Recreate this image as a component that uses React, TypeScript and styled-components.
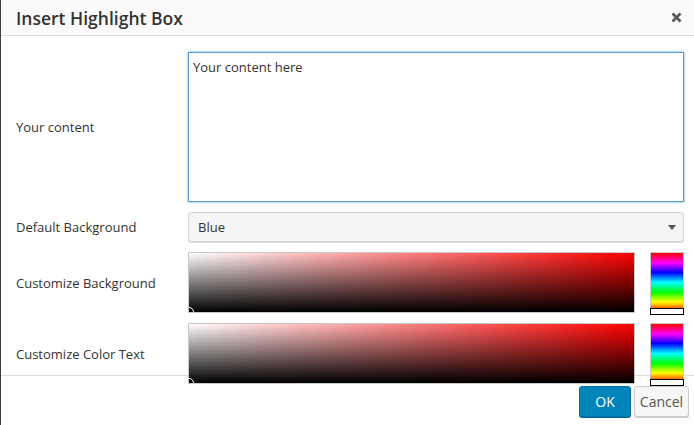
import React from "react";
import styled, { createGlobalStyle } from "styled-components";

const GlobalStyle = createGlobalStyle`
    html, body {
        margin: 0;
        padding: 0;
        background: #fff;
    }
    body {
        font-family: "Open Sans", "Noto Sans", sans-serif;
        color: #333;
    }
`;

const Dialog = styled.div`
    width: 694px;
    height: 425px;
    box-sizing: border-box;
    border-left: 1px solid #3f3f3f;
    display: flex;
    flex-direction: column;
    background: #fff;
`;

const Header = styled.div`
    height: 36px;
    flex: none;
    box-sizing: border-box;
    background: #fafafa;
    border-bottom: 1px solid #dcdcdc;
    display: flex;
    align-items: center;
    justify-content: space-between;
    padding: 0 8px 0 15px;
`;

const Title = styled.h1`
    margin: 0;
    font-size: 17.5px;
    font-weight: 600;
    color: #333;
`;

const CloseButton = styled.button`
    width: 20px;
    height: 20px;
    padding: 0;
    border: none;
    background: none;
    display: flex;
    align-items: center;
    justify-content: center;
    cursor: pointer;
`;

const Body = styled.div`
    position: relative;
    z-index: 1;
    height: 339px;
    flex: none;
    box-sizing: border-box;
    padding: 16px 10px 0 15px;
    display: grid;
    grid-template-columns: 172px 1fr;
    grid-auto-rows: min-content;
    row-gap: 10px;
    align-items: center;
`;

const Label = styled.label`
    font-size: 13px;
    color: #333;
`;

const TextArea = styled.textarea`
    height: 150px;
    box-sizing: border-box;
    resize: none;
    border: 1px solid #5b9dd9;
    box-shadow: 0 0 2px rgba(30, 140, 190, 0.8);
    padding: 5px 4px;
    font-family: "Open Sans", "Noto Sans", sans-serif;
    font-size: 13px;
    color: #333;
    outline: none;
`;

const Select = styled.div`
    position: relative;
    height: 30px;
    box-sizing: border-box;
    border: 1px solid #d4d4d4;
    border-radius: 3px;
    background: #f5f5f5;
    box-shadow: 0 1px 0 #ddd;
    display: flex;
    align-items: center;
    justify-content: space-between;
    padding: 0 7px 0 9px;
    font-size: 13px;
    color: #333;
`;

const Caret = styled.span`
    width: 0;
    height: 0;
    border-left: 4px solid transparent;
    border-right: 4px solid transparent;
    border-top: 5px solid #555;
`;

const PickerRow = styled.div`
    display: flex;
    gap: 15px;
    height: 61px;
`;

const SatBox = styled.div`
    position: relative;
    flex: 1;
    box-sizing: border-box;
    border: 1px solid #c8c8c8;
    overflow: hidden;
    background:
        linear-gradient(to top, #000, rgba(0, 0, 0, 0)),
        linear-gradient(to right, #fff, rgba(255, 255, 255, 0)),
        #f00;
`;

const SatMarker = styled.span`
    position: absolute;
    left: -5px;
    bottom: -5px;
    width: 8px;
    height: 8px;
    border-radius: 50%;
    border: 1px solid #fff;
    box-shadow: 0 0 0 1px #222;
`;

const HueStrip = styled.div`
    position: relative;
    width: 34px;
    box-sizing: border-box;
    border: 1px solid #c8c8c8;
    background: linear-gradient(
        to bottom,
        #f00 0%,
        #f0f 17%,
        #00f 33%,
        #0ff 50%,
        #0f0 67%,
        #ff0 83%,
        #f00 100%
    );
`;

const HueMarker = styled.span`
    position: absolute;
    left: -1px;
    right: -1px;
    bottom: -3px;
    height: 5px;
    background: #fff;
    border: 1px solid #000;
`;

const Footer = styled.div`
    flex: 1;
    box-sizing: border-box;
    border-top: 1px solid #dcdcdc;
    display: flex;
    justify-content: flex-end;
    align-items: flex-start;
    gap: 3px;
    padding: 10px 5px 0 0;
`;

const Button = styled.button<{ $primary?: boolean }>`
    width: ${(p) => (p.$primary ? "52px" : "55px")};
    height: 31px;
    box-sizing: border-box;
    border-radius: 3px;
    font-family: "Open Sans", "Noto Sans", sans-serif;
    font-size: 14px;
    padding: 0;
    cursor: pointer;
    border: 1px solid ${(p) => (p.$primary ? "#0073aa" : "#ccc")};
    background: ${(p) => (p.$primary ? "#0085ba" : "#f7f7f7")};
    color: ${(p) => (p.$primary ? "#fff" : "#555")};
    box-shadow: 0 1px 0 ${(p) => (p.$primary ? "#006799" : "#ccc")};
`;

function ColorPicker() {
    return (
        <PickerRow>
            <SatBox>
                <SatMarker />
            </SatBox>
            <HueStrip>
                <HueMarker />
            </HueStrip>
        </PickerRow>
    );
}

export default function App() {
    return (
        <>
            <GlobalStyle />
            <Dialog>
                <Header>
                    <Title>Insert Highlight Box</Title>
                    <CloseButton aria-label="Close">
                        <svg width="11" height="11" viewBox="0 0 11 11">
                            <path
                                d="M1.5 1.5 L9.5 9.5 M9.5 1.5 L1.5 9.5"
                                stroke="#555"
                                strokeWidth="2.6"
                            />
                        </svg>
                    </CloseButton>
                </Header>
                <Body>
                    <Label>Your content</Label>
                    <TextArea defaultValue="Your content here" />
                    <Label>Default Background</Label>
                    <Select>
                        Blue
                        <Caret />
                    </Select>
                    <Label>Customize Background</Label>
                    <ColorPicker />
                    <Label>Customize Color Text</Label>
                    <ColorPicker />
                </Body>
                <Footer>
                    <Button $primary>OK</Button>
                    <Button>Cancel</Button>
                </Footer>
            </Dialog>
        </>
    );
}
